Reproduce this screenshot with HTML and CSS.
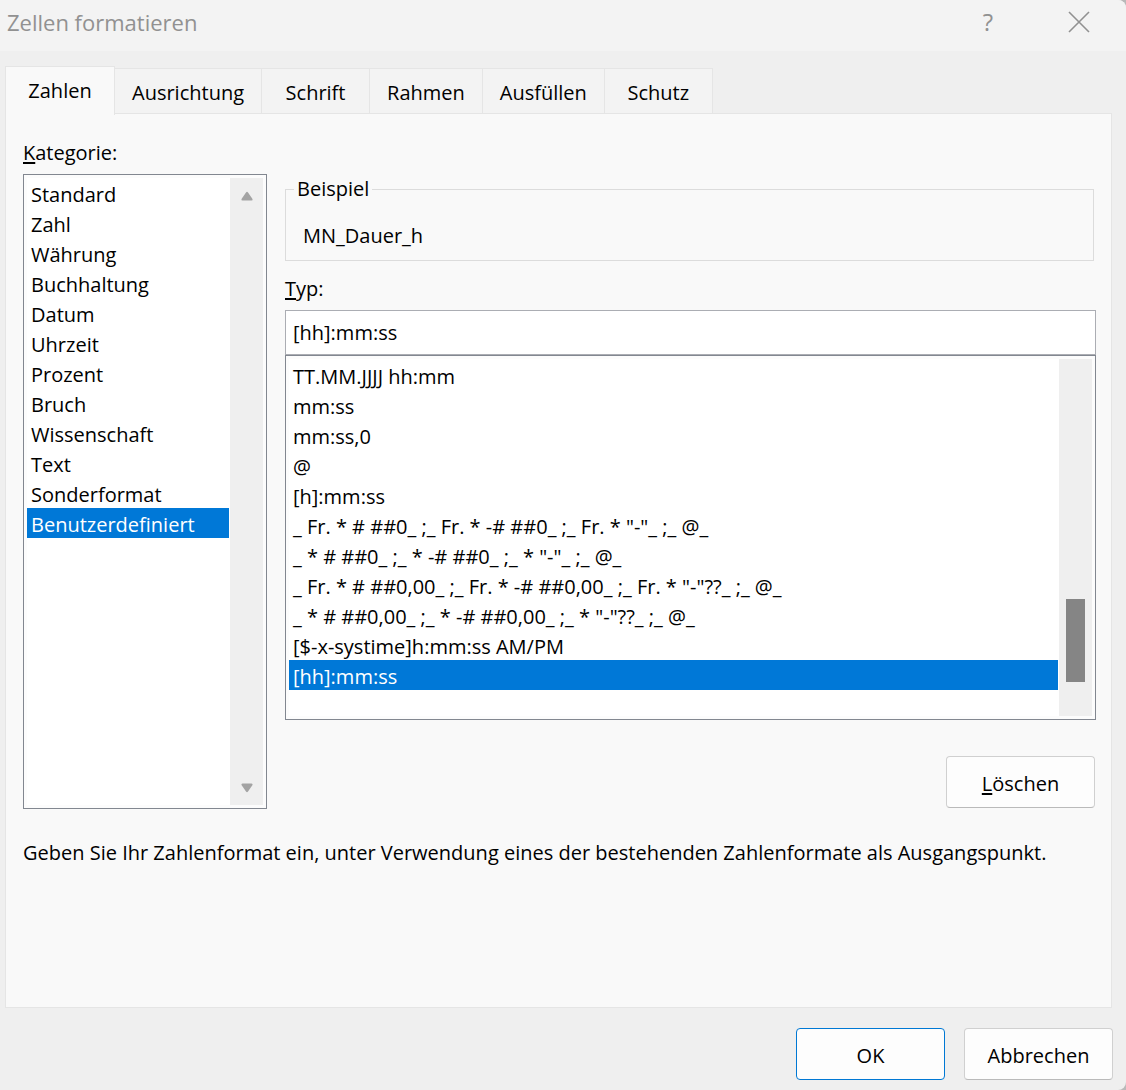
FILE: index.html
```html
<!DOCTYPE html>
<html lang="de">
<head>
    <meta charset="UTF-8">
    <title>Zellen formatieren</title>
    <link rel="stylesheet" href="styles.css">
</head>
<body>
<div class="dialog">

    <header class="titlebar">
        <h1>Zellen formatieren</h1>
        <button type="button" class="help" aria-label="Hilfe">?</button>
        <button type="button" class="close" aria-label="Schließen">
            <svg width="22" height="22" viewBox="0 0 22 22">
                <path d="M1 1L21 21M21 1L1 21" fill="none" stroke="#919191" stroke-width="1.6"/>
            </svg>
        </button>
    </header>

    <nav class="tabs" role="tablist">
        <button type="button" role="tab" class="tab active" aria-selected="true">Zahlen</button>
        <button type="button" role="tab" class="tab">Ausrichtung</button>
        <button type="button" role="tab" class="tab">Schrift</button>
        <button type="button" role="tab" class="tab">Rahmen</button>
        <button type="button" role="tab" class="tab">Ausfüllen</button>
        <button type="button" role="tab" class="tab">Schutz</button>
    </nav>

    <main class="panel">
        <div class="columns">

            <section class="category">
                <label for="kategorie"><u>K</u>ategorie:</label>
                <div class="listbox">
                    <select id="kategorie" size="12">
                        <option>Standard</option>
                        <option>Zahl</option>
                        <option>Währung</option>
                        <option>Buchhaltung</option>
                        <option>Datum</option>
                        <option>Uhrzeit</option>
                        <option>Prozent</option>
                        <option>Bruch</option>
                        <option>Wissenschaft</option>
                        <option>Text</option>
                        <option>Sonderformat</option>
                        <option selected>Benutzerdefiniert</option>
                    </select>
                    <div class="scrollbar arrows">
                        <svg width="12" height="10" viewBox="0 0 12 10">
                            <path d="M5 1.5Q6 0 7 1.5L11.5 8Q12 9.5 10.5 9.5H1.5Q0 9.5 .5 8Z" fill="#a3a3a3"/>
                        </svg>
                        <svg width="12" height="10" viewBox="0 0 12 10">
                            <path d="M5 8.5Q6 10 7 8.5L11.5 2Q12 .5 10.5 .5H1.5Q0 .5 .5 2Z" fill="#a3a3a3"/>
                        </svg>
                    </div>
                </div>
            </section>

            <section class="format">
                <fieldset>
                    <legend>Beispiel</legend>
                    <p>MN_Dauer_h</p>
                </fieldset>

                <label for="typ"><u>T</u>yp:</label>
                <input type="text" id="typ" value="[hh]:mm:ss">
                <div class="listbox">
                    <select size="12" aria-label="Zahlenformate">
                        <option>TT.MM.JJJJ hh:mm</option>
                        <option>mm:ss</option>
                        <option>mm:ss,0</option>
                        <option>@</option>
                        <option>[h]:mm:ss</option>
                        <option>_ Fr. * # ##0_ ;_ Fr. * -# ##0_ ;_ Fr. * "-"_ ;_ @_ </option>
                        <option>_ * # ##0_ ;_ * -# ##0_ ;_ * "-"_ ;_ @_ </option>
                        <option>_ Fr. * # ##0,00_ ;_ Fr. * -# ##0,00_ ;_ Fr. * "-"??_ ;_ @_ </option>
                        <option>_ * # ##0,00_ ;_ * -# ##0,00_ ;_ * "-"??_ ;_ @_ </option>
                        <option>[$-x-systime]h:mm:ss AM/PM</option>
                        <option selected>[hh]:mm:ss</option>
                    </select>
                    <div class="scrollbar">
                        <div class="thumb"></div>
                    </div>
                </div>

                <button type="button" class="btn delete"><span><u>L</u>öschen</span></button>
            </section>

        </div>

        <p class="hint">Geben Sie Ihr Zahlenformat ein, unter Verwendung eines der bestehenden Zahlenformate als Ausgangspunkt.</p>
    </main>

    <footer class="actions">
        <button type="button" class="btn primary">OK</button>
        <button type="button" class="btn">Abbrechen</button>
    </footer>

</div>
</body>
</html>
```
FILE: styles.css
```css
* {
    box-sizing: border-box;
}

body {
    margin: 0;
    background: #b9b9b9;
    font-family: "Open Sans", "Noto Sans", sans-serif;
    font-size: 20px;
    line-height: 26px;
    color: #000;
}

button, input, select {
    font: inherit;
    color: inherit;
}

u {
    text-decoration-thickness: 2px;
    text-underline-offset: 2px;
}

.dialog {
    display: flex;
    flex-direction: column;
    min-height: 100vh;
    background: #efefef;
    border-radius: 0 8px 8px 0;
    overflow: hidden;
}

/* title bar */
.titlebar {
    display: flex;
    align-items: center;
    height: 51px;
    padding: 0 29px 7px 7px;
    background: #f3f3f3;
}

.titlebar h1 {
    flex: 1;
    margin: 0;
    font-size: 22px;
    font-weight: normal;
    color: #919191;
}

.titlebar button {
    display: flex;
    align-items: center;
    justify-content: center;
    width: 36px;
    height: 36px;
    padding: 0;
    border: 0;
    background: none;
    color: #919191;
}

.titlebar .help {
    margin-right: 55px;
    font-size: 24px;
}

/* tabs */
.tabs {
    display: flex;
    align-items: flex-end;
    margin: 15px 14px 0 5px;
}

.tab {
    height: 46px;
    min-width: 108px;
    padding: 2px 17px 0;
    border: 1px solid #e5e5e5;
    border-left: 0;
    border-bottom: 0;
    background: #f3f3f3;
}

.tab.active {
    height: 49px;
    min-width: 110px;
    margin-bottom: -1px;
    padding: 0 22px;
    border-left: 1px solid #e5e5e5;
    background: #f9f9f9;
    z-index: 1;
}

.panel {
    flex: 1;
    margin: -1px 14px 0 5px;
    padding: 26px 15px 26px 17px;
    border: 1px solid #e5e5e5;
    background: #f9f9f9;
}

.columns {
    display: grid;
    grid-template-columns: 244px 1fr;
    gap: 18px;
}

.category,
.format {
    display: flex;
    flex-direction: column;
}

.format {
    padding: 36px 0 1px;
}

label {
    margin-bottom: 8px;
}

/* list boxes */
.listbox {
    display: flex;
    padding: 3px;
    border: 1px solid #828790;
    background: #fcfcfc;
}

.category .listbox {
    flex: 1;
}

.listbox select {
    flex: 1;
    min-width: 0;
    height: 357px;
    padding: 1px 0 0;
    border: 0;
    border-radius: 0;
    outline: 0;
    background: #fff;
    overflow: hidden;
}

.category select {
    height: auto;
    padding: 0;
}

.listbox option {
    height: 30px;
    min-height: 30px;
    margin-right: 1px;
    padding: 3px 4px 0;
}

.listbox option:checked {
    background: linear-gradient(#0078d7, #0078d7);
    -webkit-text-fill-color: #fff;
}

.scrollbar {
    display: flex;
    flex-direction: column;
    align-items: center;
    width: 33px;
    background: #efefef;
}

.scrollbar.arrows {
    justify-content: space-between;
    padding: 13px 0 12px;
}

.thumb {
    width: 19px;
    height: 83px;
    margin-top: 240px;
    background: #858585;
}

/* right column */
fieldset {
    min-width: 0;
    margin: 0 2px 15px 0;
    padding: 21px 17px 11px;
    border: 1px solid #dcdcdc;
}

legend {
    margin-left: -9px;
    padding: 0 3px;
}

fieldset p {
    margin: 0;
}

input {
    width: 100%;
    height: 45px;
    padding: 0 7px;
    border: 1px solid #abadb3;
    border-radius: 0;
    outline: 0;
    background: #fff;
}

.btn {
    width: 149px;
    height: 52px;
    padding: 3px 0 0;
    border: 1px solid #d0d0d0;
    border-bottom-color: #bababa;
    border-radius: 4px;
    background: #fdfdfd;
}

.btn.primary {
    border-color: #0078d4;
}

.delete {
    align-self: flex-end;
    margin: 36px 1px 0 0;
}

.hint {
    margin: 31px 0 0;
}

.actions {
    display: flex;
    justify-content: flex-end;
    gap: 19px;
    padding: 20px 13px 10px;
}
```
